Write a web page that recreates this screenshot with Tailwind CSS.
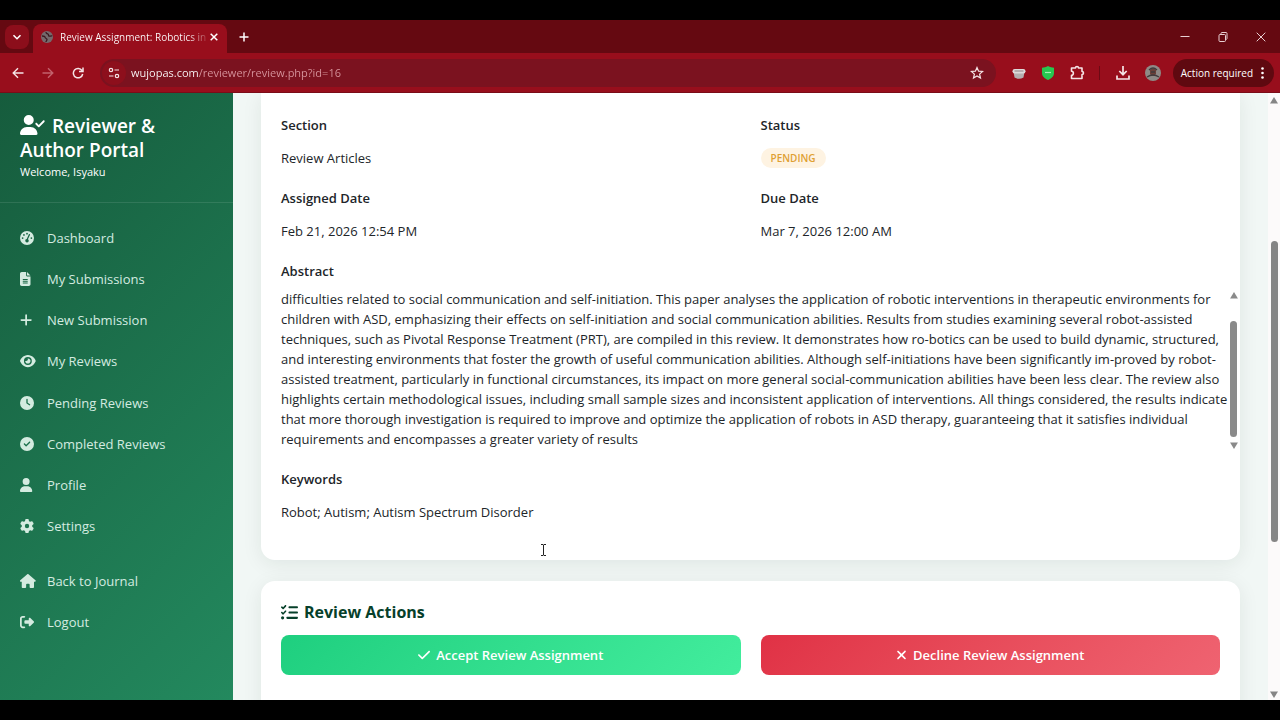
<!DOCTYPE html>
<html lang="en">
<head>
    <meta charset="UTF-8">
    <meta name="viewport" content="width=device-width, initial-scale=1.0">
    <title>Review Assignment: Robotics in</title>
    <script src="https://cdn.jsdelivr.net/npm/@tailwindcss/browser@4"></script>
</head>
<body class="h-screen flex flex-col overflow-hidden border-y-20 border-black bg-[#f1f7f5] font-['Open_Sans','Noto_Sans',sans-serif] text-[13px] leading-5 text-[#212529]">

    <!-- Tab strip -->
    <div class="h-[33px] shrink-0 bg-[#650911] flex items-end pl-[5px] text-white">
        <button type="button" aria-label="Search tabs" class="size-6 mb-1 rounded-lg bg-[#8c0e1b] flex items-center justify-center">
            <svg class="size-2.5" viewBox="0 0 10 10" fill="none" stroke="currentColor" stroke-width="1.6"><path d="M1.5 3.2 5 6.7l3.5-3.5"/></svg>
        </button>
        <div class="ml-1 w-[194px] h-[29px] rounded-t-lg bg-[#980e1c] flex items-center pl-2 pr-2 pb-[3px]">
            <svg class="size-3 shrink-0" viewBox="0 0 12 12"><circle cx="6" cy="6" r="6" fill="#75696c"/><path d="M1 5c2 0 3 .4 3.200 1.500S6 7.500 6 8.500 5 10 5 11M5 1c0 2 1 1.500 2 2s0 2 1.200 2.200S10 4.500 11.300 5" fill="none" stroke="#3d1a20" stroke-width="1.300"/></svg>
            <span class="ml-[7px] whitespace-nowrap text-[10px] bg-linear-to-r from-white from-88% to-white/20 bg-clip-text text-transparent">Review Assignment: Robotics in</span>
            <button type="button" aria-label="Close tab" class="ml-auto">
                <svg class="size-2.5" viewBox="0 0 10 10" stroke="currentColor" stroke-width="1.500"><path d="m1.700 1.700 6.600 6.600m0-6.600L1.700 8.300"/></svg>
            </button>
        </div>
        <button type="button" aria-label="New tab" class="ml-3 mb-[11px]">
            <svg class="size-2.5" viewBox="0 0 10 10" stroke="currentColor" stroke-width="1.500"><path d="M5 .5v9M.5 5h9"/></svg>
        </button>
        <div class="ml-auto mr-[14px] mb-[11px] flex gap-7 text-[#e8cfd2]">
            <button type="button" aria-label="Minimize"><svg class="size-2.5" viewBox="0 0 10 10" stroke="currentColor"><path d="M.5 4.500h9"/></svg></button>
            <button type="button" aria-label="Restore"><svg class="size-2.5" viewBox="0 0 10 10" fill="none" stroke="currentColor"><rect x="1" y="2.500" width="6.500" height="7" rx="1"/><path d="M3 2.500V1.500q0-1 1-1h4q1 0 1 1v5q0 1-1.500 1"/></svg></button>
            <button type="button" aria-label="Close"><svg class="size-2.5" viewBox="0 0 10 10" stroke="currentColor"><path d="m.7.7 8.600 8.600m0-8.600L.7 9.300"/></svg></button>
        </div>
    </div>

    <!-- Toolbar -->
    <div class="h-10 shrink-0 bg-[#980e1c] border-b border-[#7a0c18] flex items-center pl-3 pr-1.5 text-[#f5e4e6]">
        <button type="button" aria-label="Back"><svg class="size-3" viewBox="0 0 12 12" fill="none" stroke="currentColor" stroke-width="1.400"><path d="M11.500 6h-10M6 1.200 1.200 6 6 10.800"/></svg></button>
        <button type="button" aria-label="Forward" class="ml-[18px] text-[#c2626c]"><svg class="size-3" viewBox="0 0 12 12" fill="none" stroke="currentColor" stroke-width="1.400"><path d="M.5 6h10M6 1.200 10.800 6 6 10.800"/></svg></button>
        <button type="button" aria-label="Reload" class="ml-[18px]"><svg class="size-3" viewBox="0 0 12 12" fill="none" stroke="currentColor" stroke-width="1.500"><path d="M10 3.500A4.700 4.700 0 1 0 10.700 7M11 .5v4H7"/></svg></button>
        <div class="ml-4 h-7 flex-1 rounded-full bg-[#7b121f] flex items-center pl-0.5 pr-3">
            <button type="button" aria-label="Site information" class="size-6 rounded-full bg-[#8d0f1c] flex items-center justify-center">
                <svg class="size-3" viewBox="0 0 12 12" fill="none" stroke="currentColor" stroke-width="1.200"><circle cx="3" cy="3" r="1.700"/><path d="M6.500 3h4.500M1 9h4.500"/><circle cx="9" cy="9" r="1.700"/></svg>
            </button>
            <input type="text" aria-label="Address" value="wujopas.com/reviewer/review.php?id=16" class="ml-[5px] flex-1 outline-none text-[11px] bg-linear-to-r from-white from-[68px] to-[#d8969e] to-[68px] bg-clip-text text-transparent">
            <button type="button" aria-label="Bookmark"><svg class="size-3.5" viewBox="0 0 14 14" fill="none" stroke="currentColor" stroke-width="1.200"><path d="m7 1.500 1.600 3.700 4 .3-3 2.600.9 3.900L7 9.900 3.500 12l.9-3.900-3-2.600 4-.3z"/></svg></button>
        </div>
        <div class="ml-4 mr-3 flex items-center">
            <svg class="size-[14px]" viewBox="0 0 14 14"><path d="M1.500 6h11l-1 5.500q-4.500 2.500-9 0z" fill="#b5afb0"/><rect x=".5" y="3" width="13" height="4.500" rx="2.200" fill="#dedada"/><path d="M2.500 5h9" stroke="#8d8083"/></svg>
            <svg class="ml-4 h-[14px] w-3" viewBox="0 0 12 14"><path d="M6 0c2 1.300 4 1.700 6 1.700V7c0 3.500-3 5.700-6 7-3-1.300-6-3.500-6-7V1.700C2 1.700 4 1.300 6 0z" fill="#27c750"/><path d="M3 6.500h6" stroke="#a5f0b5" stroke-width="1.200"/></svg>
            <svg class="ml-4 size-[15px]" viewBox="0 0 15 15" fill="none" stroke="currentColor" stroke-width="1.600"><path d="M1.500 3h4c0-2 3-2 3 0h3.500v3.500c2 0 2 3 0 3V13.500H1.500v-3.200c2.500 0 2.500-4 0-4z" stroke-linejoin="round"/></svg>
            <span class="ml-3.5 w-px h-3.5 bg-[#6c0a14]"></span>
            <svg class="ml-4 size-[14px]" viewBox="0 0 14 14" fill="none" stroke="currentColor" stroke-width="1.700"><path d="M7 0v8.500M3.300 5 7 8.700 10.700 5M1 9.500V13h12V9.500"/></svg>
            <svg class="ml-[15px] size-4" viewBox="0 0 16 16"><circle cx="8" cy="8" r="8" fill="#8f8a86"/><path d="M5 5q3-3 6 0v4q-3 4-6 0z" fill="#6b4038"/><path d="M4 5q4-4 8 0M2 12q6-4 12 0M6 7h4" fill="none" stroke="#403b3c" stroke-width="1.300"/></svg>
        </div>
        <button type="button" class="h-7 rounded-full bg-[#5f0910] pl-2 pr-2.5 flex items-center text-[10px] text-white whitespace-nowrap">
            Action required
            <svg class="ml-2 h-3 w-[3px]" viewBox="0 0 3 12" fill="currentColor"><circle cx="1.500" cy="1.500" r="1.300"/><circle cx="1.500" cy="6" r="1.300"/><circle cx="1.500" cy="10.500" r="1.300"/></svg>
        </button>
    </div>

    <div class="flex-1 min-h-0 flex">
        <!-- Sidebar -->
        <aside class="w-[233px] shrink-0 bg-linear-135 from-[#165c3d] to-[#23895e] text-white">
            <div class="h-[110px] pl-5 pt-[21px] border-b border-white/10">
                <h1 class="text-[19px] leading-6 font-semibold">
                    <svg class="inline h-5 w-[25px] mr-0.5 -mt-1.5" viewBox="0 0 640 512" fill="currentColor"><path d="M96 128a128 128 0 1 1 256 0A128 128 0 1 1 96 128zM0 482.300C0 383.800 79.800 304 178.300 304h91.400C368.200 304 448 383.800 448 482.300c0 16.400-13.300 29.700-29.700 29.700H29.700C13.300 512 0 498.700 0 482.300zM625 177L497 305c-9.400 9.400-24.600 9.400-33.900 0l-64-64c-9.400-9.400-9.400-24.600 0-33.900s24.600-9.400 33.900 0l47 47L591 143c9.400-9.400 24.600-9.400 33.900 0s9.400 24.600 0 33.900z"/></svg>
                    Reviewer &amp;<br>Author Portal
                </h1>
                <p class="text-[11px]">Welcome, Isyaku</p>
            </div>
            <nav class="pt-3.5 pl-5 text-[#d4ebe0]">
                <ul class="h-[330px] grid auto-rows-fr">
                    <li class="flex"><a href="#" class="flex items-center"><svg class="h-3.5 w-[27px]" viewBox="0 0 512 512" preserveAspectRatio="xMinYMid" fill="currentColor" fill-rule="evenodd"><path d="M256 0a256 256 0 1 1 0 512A256 256 0 1 1 256 0zM256 64a32 32 0 1 0 0 64 32 32 0 1 0 0-64zM144 112a32 32 0 1 0 0 64 32 32 0 1 0 0-64zM96 224a32 32 0 1 0 0 64 32 32 0 1 0 0-64zM416 224a32 32 0 1 0 0 64 32 32 0 1 0 0-64zM352 112c12 5 17 19 12 31L290 300c18 12 30 30 30 52a64 64 0 1 1-74-63L320 124c5-12 19-18 32-12z"/></svg>Dashboard</a></li>
                    <li class="flex"><a href="#" class="flex items-center"><svg class="h-3.5 w-[27px]" viewBox="0 0 384 512" preserveAspectRatio="xMinYMid" fill="currentColor" fill-rule="evenodd"><path d="M64 0C28.700 0 0 28.700 0 64V448c0 35.300 28.700 64 64 64H320c35.300 0 64-28.700 64-64V160H256c-17.700 0-32-14.300-32-32V0H64zM256 0V128H384L256 0zM112 256H272c8.800 0 16 7.200 16 16s-7.200 16-16 16H112c-8.800 0-16-7.200-16-16s7.200-16 16-16zm0 64H272c8.800 0 16 7.200 16 16s-7.200 16-16 16H112c-8.800 0-16-7.200-16-16s7.200-16 16-16zm0 64H272c8.800 0 16 7.200 16 16s-7.200 16-16 16H112c-8.800 0-16-7.200-16-16s7.200-16 16-16z"/></svg>My Submissions</a></li>
                    <li class="flex"><a href="#" class="flex items-center"><svg class="h-3.5 w-[27px]" viewBox="0 0 448 512" preserveAspectRatio="xMinYMid" fill="currentColor"><path d="M256 80c0-17.700-14.300-32-32-32s-32 14.300-32 32V224H48c-17.700 0-32 14.300-32 32s14.300 32 32 32H192V432c0 17.700 14.300 32 32 32s32-14.300 32-32V288H400c17.700 0 32-14.300 32-32s-14.300-32-32-32H256V80z"/></svg>New Submission</a></li>
                    <li class="flex"><a href="#" class="flex items-center"><svg class="h-3.5 w-[27px]" viewBox="0 0 576 512" preserveAspectRatio="xMinYMid" fill="currentColor" fill-rule="evenodd"><path d="M288 32c-80.800 0-145.500 36.800-192.600 80.600C48.600 156 17.300 208 2.500 243.700c-3.300 7.900-3.300 16.700 0 24.600C17.300 304 48.600 356 95.400 399.400C142.500 443.200 207.200 480 288 480s145.500-36.800 192.600-80.600c46.800-43.500 78.100-95.400 93-131.100c3.300-7.900 3.300-16.700 0-24.600c-14.900-35.700-46.200-87.700-93-131.100C433.500 68.800 368.800 32 288 32zM144 256a144 144 0 1 1 288 0 144 144 0 1 1 -288 0zm144-64c0 35.300-28.700 64-64 64c-7.100 0-13.900-1.200-20.300-3.300c-5.500-1.800-11.900 1.600-11.700 7.400c.3 6.900 1.300 13.800 3.200 20.700c13.700 51.200 66.400 81.600 117.600 67.900s81.600-66.400 67.900-117.600c-11.100-41.500-47.800-69.400-88.600-71.100c-5.800-.2-9.200 6.100-7.400 11.700c2.100 6.400 3.300 13.200 3.300 20.300z"/></svg>My Reviews</a></li>
                    <li class="flex"><a href="#" class="flex items-center"><svg class="h-3.5 w-[27px]" viewBox="0 0 512 512" preserveAspectRatio="xMinYMid" fill="currentColor" fill-rule="evenodd"><path d="M256 0a256 256 0 1 1 0 512A256 256 0 1 1 256 0zM232 120V256c0 8 4 15.500 10.700 20l96 64c11 7.400 25.900 4.400 33.300-6.700s4.400-25.900-6.700-33.300L280 243.200V120c0-13.300-10.700-24-24-24s-24 10.700-24 24z"/></svg>Pending Reviews</a></li>
                    <li class="flex"><a href="#" class="flex items-center"><svg class="h-3.5 w-[27px]" viewBox="0 0 512 512" preserveAspectRatio="xMinYMid" fill="currentColor" fill-rule="evenodd"><path d="M256 512A256 256 0 1 0 256 0a256 256 0 1 0 0 512zM369 209L241 337c-9.400 9.400-24.600 9.400-33.900 0l-64-64c-9.400-9.400-9.400-24.600 0-33.900s24.600-9.400 33.900 0l47 47L335 175c9.400-9.400 24.600-9.400 33.900 0s9.400 24.600 0 33.900z"/></svg>Completed Reviews</a></li>
                    <li class="flex"><a href="#" class="flex items-center"><svg class="h-3.5 w-[27px]" viewBox="0 0 448 512" preserveAspectRatio="xMinYMid" fill="currentColor"><path d="M224 256A128 128 0 1 0 224 0a128 128 0 1 0 0 256zm-45.700 48C79.800 304 0 383.800 0 482.300C0 498.700 13.300 512 29.700 512H418.300c16.400 0 29.700-13.300 29.700-29.700C448 383.800 368.200 304 269.700 304H178.300z"/></svg>Profile</a></li>
                    <li class="flex"><a href="#" class="flex items-center"><svg class="h-3.5 w-[27px]" viewBox="0 0 512 512" preserveAspectRatio="xMinYMid" fill="currentColor" fill-rule="evenodd"><path d="M495.900 166.600c3.200 8.700 .5 18.400-6.400 24.600l-43.300 39.400c1.100 8.300 1.700 16.800 1.700 25.400s-.6 17.100-1.700 25.400l43.300 39.400c6.900 6.200 9.600 15.900 6.400 24.600c-4.400 11.900-9.700 23.300-15.800 34.300l-4.700 8.100c-6.600 11-14 21.400-22.100 31.200c-5.900 7.200-15.700 9.600-24.500 6.800l-55.700-17.700c-13.400 10.300-28.200 18.900-44 25.400l-12.500 57.100c-2 9.100-9 16.300-18.200 17.800c-13.800 2.300-28 3.500-42.500 3.500s-28.700-1.200-42.500-3.500c-9.200-1.500-16.200-8.700-18.200-17.800l-12.500-57.100c-15.800-6.500-30.600-15.100-44-25.400L83.100 425.900c-8.800 2.800-18.600 .3-24.500-6.800c-8.100-9.800-15.500-20.200-22.100-31.200l-4.700-8.100c-6.100-11-11.400-22.400-15.800-34.300c-3.200-8.700-.5-18.400 6.400-24.600l43.300-39.400C64.600 273.100 64 264.600 64 256s.6-17.100 1.700-25.400L22.400 191.200c-6.900-6.200-9.600-15.900-6.400-24.600c4.400-11.900 9.700-23.300 15.800-34.300l4.700-8.100c6.600-11 14-21.400 22.100-31.200c5.900-7.200 15.700-9.600 24.500-6.800l55.700 17.700c13.400-10.300 28.200-18.900 44-25.400l12.500-57.100c2-9.100 9-16.300 18.200-17.800C227.300 1.200 241.500 0 256 0s28.700 1.200 42.500 3.500c9.200 1.500 16.200 8.700 18.200 17.800l12.500 57.100c15.800 6.500 30.600 15.100 44 25.400l55.700-17.700c8.800-2.800 18.600-.3 24.500 6.800c8.100 9.800 15.500 20.200 22.100 31.200l4.700 8.100c6.100 11 11.400 22.400 15.800 34.300zM256 336a80 80 0 1 0 0-160 80 80 0 1 0 0 160z"/></svg>Settings</a></li>
                </ul>
                <ul class="mt-[13px] h-[83px] grid auto-rows-fr">
                    <li class="flex"><a href="#" class="flex items-center"><svg class="h-3.5 w-[27px]" viewBox="0 0 576 512" preserveAspectRatio="xMinYMid" fill="currentColor"><path d="M575.800 255.500c0 18-15 32.100-32 32.100h-32l.7 160.200c0 2.700-.2 5.400-.5 8.100V472c0 22.100-17.900 40-40 40H456c-1.100 0-2.200 0-3.300-.1c-1.400 .1-2.800 .1-4.200 .1H416 392c-22.100 0-40-17.900-40-40V448 384c0-17.700-14.300-32-32-32H256c-17.700 0-32 14.300-32 32v64 24c0 22.100-17.900 40-40 40H160 128.100c-1.500 0-3-.1-4.500-.2c-1.200 .1-2.400 .2-3.600 .2H104c-22.100 0-40-17.900-40-40V360c0-.9 0-1.900 .1-2.800V287.600H32c-18 0-32-14-32-32.100c0-9 3-17 10-24L266.400 8c7-7 15-8 22-8s15 2 21 7L564.800 231.500c8 7 12 15 11 24z"/></svg>Back to Journal</a></li>
                    <li class="flex"><a href="#" class="flex items-center"><svg class="h-3.5 w-[27px]" viewBox="0 0 512 512" preserveAspectRatio="xMinYMid" fill="currentColor"><path d="M377.900 105.900L500.700 228.700c7.200 7.200 11.300 17.100 11.300 27.300s-4.100 20.100-11.300 27.300L377.900 406.100c-6.400 6.400-15 9.900-24 9.900c-18.700 0-33.900-15.200-33.900-33.900l0-62.100-128 0c-17.700 0-32-14.300-32-32l0-64c0-17.700 14.300-32 32-32l128 0 0-62.100c0-18.700 15.200-33.900 33.900-33.900c9 0 17.600 3.600 24 9.900zM160 96L96 96c-17.700 0-32 14.300-32 32l0 256c0 17.700 14.300 32 32 32l64 0c17.700 0 32 14.300 32 32s-14.300 32-32 32l-64 0c-53 0-96-43-96-96L0 128C0 75 43 32 96 32l64 0c17.700 0 32 14.300 32 32s-14.300 32-32 32z"/></svg>Logout</a></li>
                </ul>
            </nav>
        </aside>

        <!-- Page content -->
        <main class="flex-1 min-w-0 overflow-hidden pl-7 pr-7">
            <section class="bg-white rounded-b-[14px] shadow-[0_4px_20px_rgba(0,40,25,0.08)] px-5 pb-[38px]">
                <div class="grid grid-cols-2 gap-x-5 gap-y-5 pt-[22px]">
                    <div>
                        <h2 class="font-semibold">Section</h2>
                        <p class="mt-[13px]">Review Articles</p>
                    </div>
                    <div>
                        <h2 class="font-semibold">Status</h2>
                        <p class="mt-[13px] flex"><span class="rounded-full bg-[#fef3e2] text-[#dfa032] text-[10px] font-semibold px-2.5">PENDING</span></p>
                    </div>
                    <div>
                        <h2 class="font-semibold">Assigned Date</h2>
                        <p class="mt-[13px]">Feb 21, 2026 12:54 PM</p>
                    </div>
                    <div>
                        <h2 class="font-semibold">Due Date</h2>
                        <p class="mt-[13px]">Mar 7, 2026 12:00 AM</p>
                    </div>
                </div>

                <h2 class="font-semibold mt-5">Abstract</h2>
                <div class="-mr-5 mt-2 flex gap-px h-[162px]">
                    <p class="whitespace-nowrap">difficulties related to social communication and self-initiation. This paper analyses the application of robotic interventions in therapeutic environments for<br>
                    children with ASD, emphasizing their effects on self-initiation and social communication abilities. Results from studies examining several robot-assisted<br>
                    techniques, such as Pivotal Response Treatment (PRT), are compiled in this review. It demonstrates how ro-botics can be used to build dynamic, structured,<br>
                    and interesting environments that foster the growth of useful communication abilities. Although self-initiations have been significantly im-proved by robot-<br>
                    assisted treatment, particularly in functional circumstances, its impact on more general social-communication abilities have been less clear. The review also<br>
                    highlights certain methodological issues, including small sample sizes and inconsistent application of interventions. All things considered, the results indicate<br>
                    that more thorough investigation is required to improve and optimize the application of robots in ASD therapy, guaranteeing that it satisfies individual<br>
                    requirements and encompasses a greater variety of results</p>
                    <div class="w-[11px] shrink-0 flex flex-col items-center pt-[3px] pb-0.5 text-[#8a8a8a]">
                        <svg class="w-2 h-[7px]" viewBox="0 0 8 7" fill="currentColor"><path d="M4 0l4 6.500H0z"/></svg>
                        <div class="mt-[22px] w-[7px] h-[118px] rounded-full bg-[#8a8a8a]"></div>
                        <svg class="mt-[5px] w-2 h-[7px]" viewBox="0 0 8 7" fill="currentColor"><path d="M0 .5h8L4 7z"/></svg>
                    </div>
                </div>

                <h2 class="font-semibold mt-[18px]">Keywords</h2>
                <p class="mt-[13px]">Robot; Autism; Autism Spectrum Disorder</p>
            </section>

            <section class="mt-[21px] h-[150px] bg-white rounded-[14px] shadow-[0_4px_20px_rgba(0,40,25,0.08)] px-5 pt-[19px]">
                <h2 class="flex items-center gap-1.5 text-base leading-6 font-bold text-[#06402a]">
                    <svg class="size-[17px]" viewBox="0 0 512 512" fill="currentColor"><path d="M152.100 38.200c9.900 8.900 10.700 24 1.800 33.900l-72 80c-4.400 4.900-10.600 7.800-17.200 7.900s-12.900-2.400-17.600-7L7 113C-2.300 103.600-2.300 88.400 7 79s24.600-9.400 33.900 0l22.100 22.100 55.100-61.200c8.900-9.900 24-10.700 33.900-1.800zm0 160c9.900 8.900 10.700 24 1.800 33.900l-72 80c-4.400 4.900-10.600 7.800-17.200 7.900s-12.900-2.400-17.600-7L7 273c-9.400-9.400-9.400-24.600 0-33.900s24.600-9.400 33.900 0l22.100 22.100 55.100-61.200c8.900-9.900 24-10.700 33.900-1.800zM224 96c0-17.700 14.300-32 32-32H480c17.700 0 32 14.300 32 32s-14.300 32-32 32H256c-17.700 0-32-14.300-32-32zm0 160c0-17.700 14.300-32 32-32H480c17.700 0 32 14.300 32 32s-14.300 32-32 32H256c-17.700 0-32-14.300-32-32zM160 416c0-17.700 14.300-32 32-32H480c17.700 0 32 14.300 32 32s-14.300 32-32 32H192c-17.700 0-32-14.300-32-32zM48 368a48 48 0 1 1 0 96 48 48 0 1 1 0-96z"/></svg>
                    Review Actions
                </h2>
                <div class="mt-[11px] grid grid-cols-2 gap-5 text-[13px] font-semibold text-white">
                    <button type="button" class="h-10 rounded-lg bg-linear-135 from-[#1ecf7f] to-[#42ed9d] flex items-center justify-center gap-1.5">
                        <svg class="h-3.5 w-3" viewBox="0 0 448 512" fill="currentColor"><path d="M438.600 105.400c12.500 12.500 12.500 32.800 0 45.300l-256 256c-12.500 12.500-32.800 12.500-45.300 0l-128-128c-12.500-12.500-12.500-32.800 0-45.300s32.800-12.500 45.300 0L160 338.700 393.400 105.400c12.500-12.500 32.800-12.500 45.300 0z"/></svg>
                        Accept Review Assignment
                    </button>
                    <button type="button" class="h-10 rounded-lg bg-linear-135 from-[#e03145] to-[#ef6371] flex items-center justify-center gap-1.5">
                        <svg class="h-3.5 w-[11px]" viewBox="0 0 384 512" fill="currentColor"><path d="M342.600 150.600c12.500-12.500 12.500-32.800 0-45.300s-32.800-12.500-45.300 0L192 210.700 86.600 105.400c-12.500-12.500-32.800-12.500-45.300 0s-12.500 32.800 0 45.300L146.700 256 41.400 361.400c-12.500 12.500-12.500 32.800 0 45.300s32.800 12.500 45.300 0L192 301.300 297.400 406.600c12.500 12.500 32.800 12.500 45.300 0s12.500-32.800 0-45.300L237.300 256 342.600 150.600z"/></svg>
                        Decline Review Assignment
                    </button>
                </div>
            </section>
        </main>

        <!-- Page scrollbar -->
        <div class="w-3 shrink-0 bg-[#fcfafa] flex flex-col items-center pt-1 pb-0.5 text-[#858585]">
            <svg class="w-2 h-[7px]" viewBox="0 0 8 7" fill="currentColor"><path d="M4 0l4 6.500H0z"/></svg>
            <div class="mt-[137px] w-[7px] h-[301px] rounded-full bg-[#858585]"></div>
            <svg class="mt-auto w-2 h-[7px]" viewBox="0 0 8 7" fill="currentColor"><path d="M0 .5h8L4 7z"/></svg>
        </div>
    </div>

    <!-- Text cursor -->
    <svg class="absolute left-[540px] top-[544px] w-[7px] h-3" viewBox="0 0 7 12" fill="none" stroke="#222"><path d="M1 .5h2l.5.5.5-.5h2M3.500 1v10M1 11.500h2l.5-.5.5.5h2"/></svg>
</body>
</html>
